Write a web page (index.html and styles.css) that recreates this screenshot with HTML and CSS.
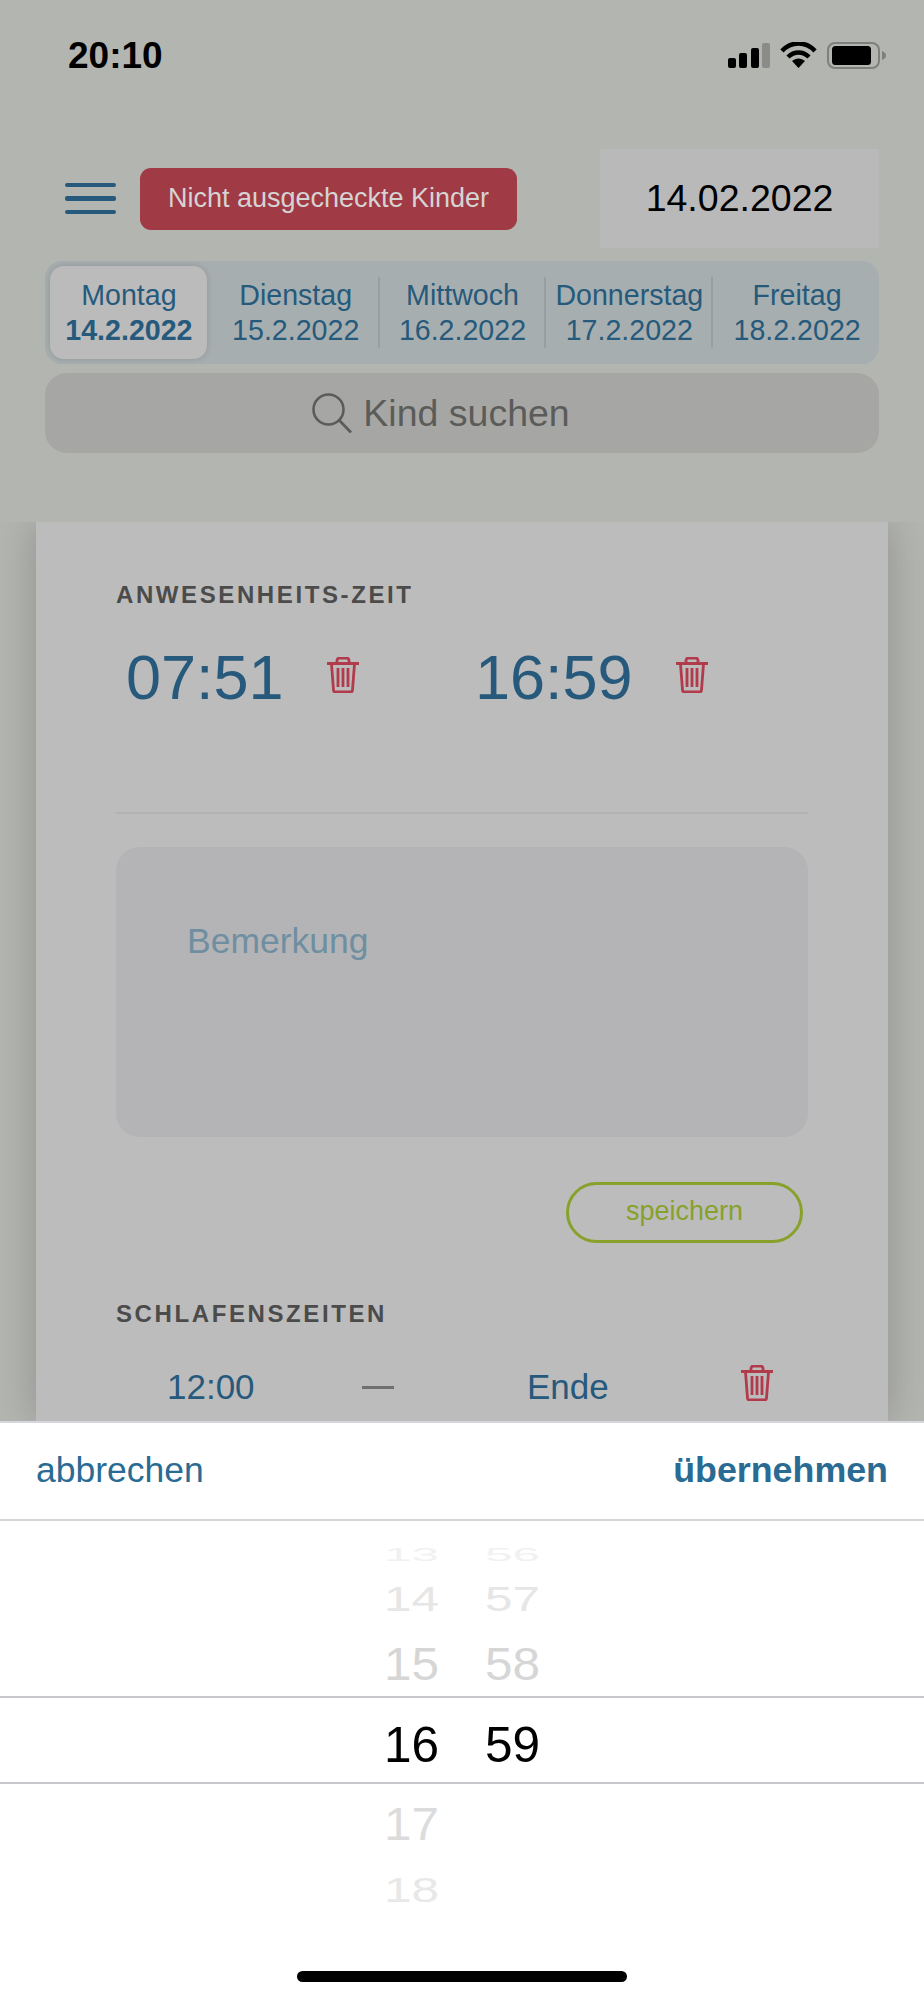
FILE: index.html
```html
<!DOCTYPE html>
<html lang="de">
<head>
    <meta charset="UTF-8">
    <meta name="viewport" content="width=device-width, initial-scale=1.0">
    <title>Anwesenheit</title>
    <link rel="stylesheet" href="styles.css">
</head>
<body>
<svg class="sprite" width="0" height="0">
    <symbol id="trash" viewBox="0 0 32 36">
        <path d="M0 6.5h32M10 6V3.5A2.5 2.5 0 0 1 12.500 1h7A2.500 2.500 0 0 1 22 3.500V6M4.500 7l2 26a2 2 0 0 0 2 2h15a2 2 0 0 0 2-2l2-26M11 11v19M16 11v19M21 11v19" fill="none" stroke="#b13a4b" stroke-width="2.800"/>
    </symbol>
</svg>
<div class="page">
    <div class="backdrop">
        <div class="header">
            <div class="status">
                <span class="clock">20:10</span>
                <div class="status-icons">
                    <svg width="42" height="25" viewBox="0 0 42 25">
                        <rect x="0" y="15" width="8" height="10" rx="2" fill="#000"/>
                        <rect x="11" y="10" width="8" height="15" rx="2" fill="#000"/>
                        <rect x="23" y="5" width="8" height="20" rx="2" fill="#000"/>
                        <rect x="34" y="0" width="8" height="25" rx="2" fill="#8b8c8a"/>
                    </svg>
                    <svg width="37" height="26" viewBox="0 0 37 26">
                        <path d="M2 9C11-1 26-1 35 9M8 15c6-6 15-6 21 0" fill="none" stroke="#000" stroke-width="4.500"/>
                        <path d="M12 19c4-3.500 9-3.500 13 0l-6.500 7z" fill="#000"/>
                    </svg>
                    <svg width="59" height="27" viewBox="0 0 59 27">
                        <rect x="1" y="1" width="51" height="25" rx="7" fill="none" stroke="#7f807e" stroke-width="2"/>
                        <rect x="5" y="4" width="39" height="19" rx="3.500" fill="#000"/>
                        <path d="M55 9c3 1 4 3 4 4.500S58 17 55 18z" fill="#7f807e"/>
                    </svg>
                </div>
            </div>
            <div class="topbar">
                <div class="burger"><span></span><span></span><span></span></div>
                <div class="alert-btn">Nicht ausgecheckte Kinder</div>
                <div class="date-box">14.02.2022</div>
            </div>
            <div class="tabs">
                <div class="tab active">Montag<b>14.2.2022</b></div>
                <div class="tab">Dienstag<span>15.2.2022</span></div>
                <div class="tab">Mittwoch<span>16.2.2022</span></div>
                <div class="tab">Donnerstag<span>17.2.2022</span></div>
                <div class="tab">Freitag<span>18.2.2022</span></div>
            </div>
            <div class="search">
                <svg width="40" height="40" viewBox="0 0 40 40">
                    <circle cx="16.500" cy="16.500" r="15" fill="none" stroke="#5b5c5a" stroke-width="2.600"/>
                    <path d="M27 27l12 12.500" fill="none" stroke="#5b5c5a" stroke-width="2.800"/>
                </svg>
                <span>Kind suchen</span>
            </div>
        </div>

        <div class="card">
            <h2 class="section-title">ANWESENHEITS-ZEIT</h2>
            <div class="times">
                <div class="time-slot">
                    <span class="time">07:51</span>
                    <svg class="trash"><use href="#trash"/></svg>
                </div>
                <div class="time-slot">
                    <span class="time">16:59</span>
                    <svg class="trash"><use href="#trash"/></svg>
                </div>
            </div>
            <div class="note">Bemerkung</div>
            <div class="save-btn">speichern</div>
            <h2 class="section-title sleep-title">SCHLAFENSZEITEN</h2>
            <div class="sleep-row">
                <span>12:00</span>
                <span class="dash"></span>
                <span>Ende</span>
                <svg class="trash sleep-trash"><use href="#trash"/></svg>
            </div>
        </div>
    </div>

    <div class="sheet">
        <div class="sheet-bar">
            <span>abbrechen</span>
            <b>übernehmen</b>
        </div>
        <div class="picker">
            <div class="row row-13"><span>13</span><span>56</span></div>
            <div class="row row-14"><span>14</span><span>57</span></div>
            <div class="row row-15"><span>15</span><span>58</span></div>
            <div class="row row-16"><span>16</span><span>59</span></div>
            <div class="row row-17"><span>17</span></div>
            <div class="row row-18"><span>18</span></div>
        </div>
        <div class="home-bar"></div>
    </div>
</div>
</body>
</html>
```

FILE: styles.css
```css
* {
    box-sizing: border-box;
}

body {
    margin: 0;
    font-family: "Liberation Sans", Arial, sans-serif;
}

.sprite {
    display: block;
}

.page {
    width: 924px;
    height: 2000px;
    display: flex;
    flex-direction: column;
    overflow: hidden;
}

.backdrop {
    height: 1421px;
    flex: none;
    overflow: hidden;
    background-color: #b3b5b1;
}

.header {
    position: relative;
    z-index: 1;
    height: 522px;
    background-color: #b3b5b1;
}

.status {
    height: 149px;
    padding: 36px 38px 0 68px;
    display: flex;
    justify-content: space-between;
}

.clock {
    font-size: 37px;
    font-weight: bold;
    line-height: 40px;
    color: #000;
}

.status-icons {
    display: flex;
    align-items: center;
    height: 40px;
    margin-top: -1px;
    gap: 10px;
}

.topbar {
    height: 99px;
    padding: 0 45px 0 65px;
    display: flex;
    align-items: center;
}

.burger {
    width: 51px;
    margin-right: 24px;
    display: flex;
    flex-direction: column;
    gap: 9px;
}

.burger span {
    height: 4.500px;
    border-radius: 2px;
    background-color: #26597b;
}

.alert-btn {
    width: 377px;
    height: 62px;
    border-radius: 11px;
    background-color: #a03a45;
    color: #d6d3d3;
    font-size: 27px;
    line-height: 60px;
    text-align: center;
}

.date-box {
    width: 279px;
    height: 99px;
    margin-left: auto;
    background-color: #b9b9b9;
    color: #000;
    font-size: 37.500px;
    line-height: 98px;
    text-align: center;
}

.tabs {
    height: 103px;
    margin: 13px 45px 0;
    border-radius: 17px;
    background-color: #a7aeaf;
    display: grid;
    grid-template-columns: repeat(5, 1fr);
    align-items: center;
}

.tab {
    height: 71px;
    margin-right: -1px;
    padding-left: 2px;
    display: flex;
    flex-direction: column;
    align-items: center;
    justify-content: center;
    color: #265a7c;
    font-size: 28.600px;
    line-height: 35px;
    border-right: 2px solid #979fa1;
}

.tab:last-child {
    border-right: 0;
}

.tab.active {
    height: 93px;
    margin: 0 5px;
    padding-left: 1px;
    border: 0;
    border-radius: 14px;
    background-color: #bbbbbb;
    box-shadow: 0 0 6px rgba(0, 0, 0, 0.14);
}

.search {
    height: 80px;
    margin: 9px 45px 0;
    padding-right: 42px;
    border-radius: 22px;
    background-color: #a6a7a4;
    color: #5b5c5a;
    font-size: 37.500px;
    display: flex;
    align-items: center;
    justify-content: center;
    gap: 11px;
}

.card {
    height: 899px;
    margin: 0 36px;
    padding: 59px 80px 0;
    background-color: #bcbcbc;
    box-shadow: 0 0 40px rgba(0, 0, 0, 0.2);
}

.section-title {
    margin: 0;
    color: #4b4b4b;
    font-size: 24px;
    font-weight: bold;
    letter-spacing: 2.600px;
    line-height: 28px;
}

.times {
    height: 172px;
    margin-top: 33px;
    padding-left: 10px;
    border-bottom: 2px solid #b2b2b2;
    display: flex;
}

.time-slot {
    width: 349px;
    height: 70px;
    flex: none;
    display: flex;
    align-items: center;
    gap: 43px;
}

.time {
    color: #26597b;
    font-size: 63px;
    line-height: 70px;
}

.trash {
    width: 32px;
    height: 36px;
    flex: none;
    margin-bottom: 4px;
}

.note {
    height: 290px;
    margin-top: 33px;
    padding: 74px 71px 0;
    border-radius: 24px;
    background-color: #b4b4b6;
    color: #6f8fa1;
    font-size: 35.500px;
    line-height: 40px;
}

.save-btn {
    width: 237px;
    height: 61px;
    margin: 45px 5px 0 auto;
    border: 3px solid #87a12b;
    border-radius: 31px;
    color: #87a12b;
    font-size: 27px;
    line-height: 53px;
    text-align: center;
}

.section-title.sleep-title {
    margin-top: 57px;
}

.sleep-row {
    height: 40px;
    margin-top: 39px;
    padding-left: 51px;
    display: grid;
    grid-template-columns: 195px 165px 214px auto;
    align-items: center;
    color: #26597b;
    font-size: 35px;
    line-height: 40px;
}

.dash {
    width: 32px;
    height: 3px;
    background-color: #6e6f6e;
}

.sleep-trash {
    margin: -8px 0 0;
}

.sheet {
    flex: 1;
    background-color: #fff;
    border-top: 2px solid #d6d6dc;
    display: flex;
    flex-direction: column;
}

.sheet-bar {
    height: 98px;
    padding: 0 36px 2px;
    border-bottom: 2px solid #d4d4d6;
    display: flex;
    align-items: center;
    justify-content: space-between;
    color: #2a6b93;
    font-size: 35.500px;
}

.sheet-bar b {
    font-size: 35.800px;
}

.picker {
    padding-top: 23px;
    font-size: 49.500px;
}

.row {
    padding-left: 384px;
    display: flex;
    align-items: center;
}

/* wheel rows get squashed towards the edges */
.row span {
    display: block;
    width: 101px;
    line-height: 1;
}

.row-13 {
    height: 22px;
    color: #f1f1f1;
}

.row-13 span {
    transform: scaleY(0.38);
}

.row-14 {
    height: 66px;
    color: #e6e6e6;
}

.row-14 span,
.row-18 span {
    transform: scaleY(0.72);
}

.row-15 {
    height: 64px;
    color: #d6d6d6;
}

.row-15 span,
.row-17 span {
    transform: scaleY(0.92);
}

.row-16 {
    height: 88px;
    padding-top: 10px;
    border-top: 2px solid #c8c8cc;
    border-bottom: 2px solid #c8c8cc;
    color: #000;
}

.row-17 {
    height: 80px;
    color: #dcdcdc;
}

.row-18 {
    height: 52px;
    color: #e8e8e8;
}

.home-bar {
    width: 330px;
    height: 11px;
    margin: auto auto 18px;
    border-radius: 6px;
    background-color: #000;
}
```
